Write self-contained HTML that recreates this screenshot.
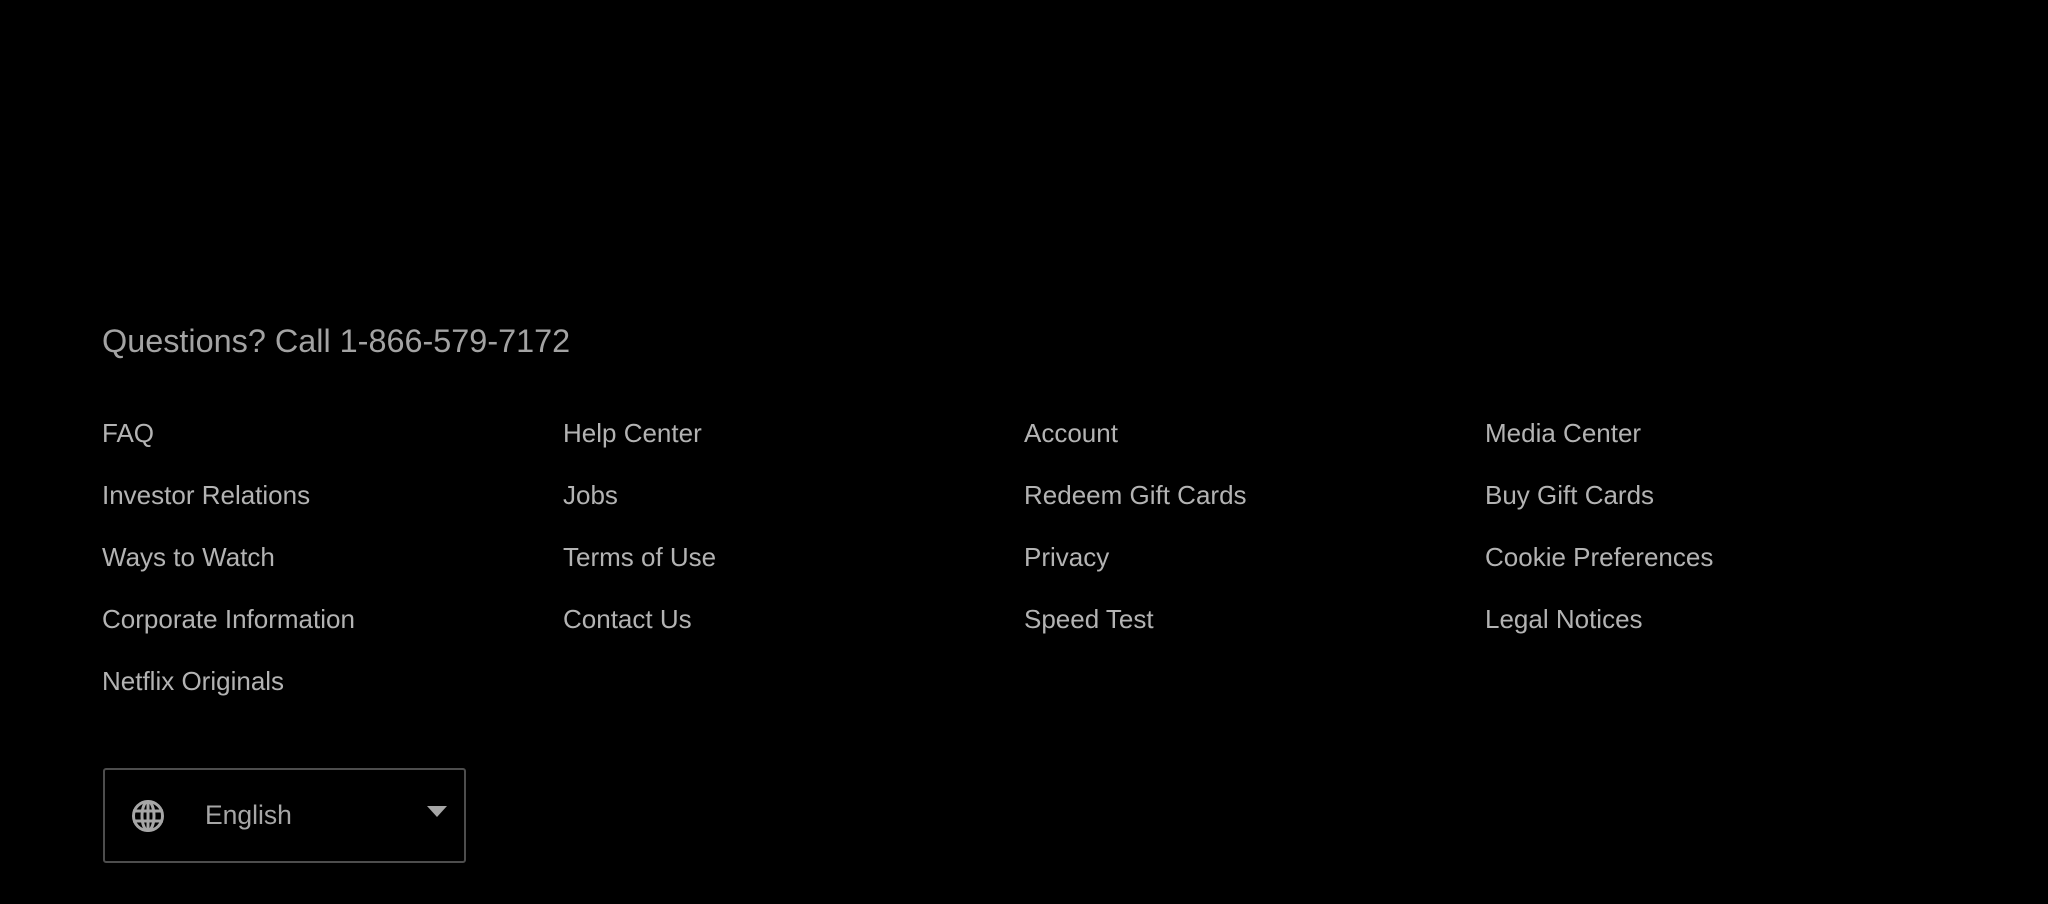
<!DOCTYPE html>
<html><head><meta charset="utf-8"><style>
html,body{margin:0;padding:0;background:#000;width:2048px;height:904px;overflow:hidden;font-family:"Liberation Sans",Arial,sans-serif}
.t{position:absolute;line-height:1;white-space:nowrap}
.q{font-size:32.4px;color:#a3a3a3;left:102px;top:325px}
.l{font-size:26px;color:#b3b3b3}
.box{position:absolute;left:103px;top:768px;width:363px;height:95px;border:2px solid #4d4d4d;border-radius:3px;box-sizing:border-box}
</style></head><body>
<div class="t q">Questions? Call 1-866-579-7172</div>

<div class="t l" style="left:102px;top:420px">FAQ</div>
<div class="t l" style="left:102px;top:482px">Investor Relations</div>
<div class="t l" style="left:102px;top:544px">Ways to Watch</div>
<div class="t l" style="left:102px;top:606px">Corporate Information</div>
<div class="t l" style="left:102px;top:668px">Netflix Originals</div>

<div class="t l" style="left:563px;top:420px">Help Center</div>
<div class="t l" style="left:563px;top:482px">Jobs</div>
<div class="t l" style="left:563px;top:544px">Terms of Use</div>
<div class="t l" style="left:563px;top:606px">Contact Us</div>

<div class="t l" style="left:1024px;top:420px">Account</div>
<div class="t l" style="left:1024px;top:482px">Redeem Gift Cards</div>
<div class="t l" style="left:1024px;top:544px">Privacy</div>
<div class="t l" style="left:1024px;top:606px">Speed Test</div>

<div class="t l" style="left:1485px;top:420px">Media Center</div>
<div class="t l" style="left:1485px;top:482px">Buy Gift Cards</div>
<div class="t l" style="left:1485px;top:544px">Cookie Preferences</div>
<div class="t l" style="left:1485px;top:606px">Legal Notices</div>

<div class="box"></div>
<svg style="position:absolute;left:131px;top:799px" width="34" height="34" viewBox="0 0 34 34">
<g fill="none" stroke="#a6a6a6" stroke-width="3">
<circle cx="17" cy="17" r="14.5"/>
<ellipse cx="17" cy="17" rx="6" ry="14.5"/>
<line x1="17" y1="2" x2="17" y2="32"/>
<line x1="2" y1="12" x2="32" y2="12"/>
<line x1="2" y1="22" x2="32" y2="22"/>
</g></svg>
<div class="t" style="left:205px;top:802px;font-size:26.5px;color:#a6a6a6">English</div>
<svg style="position:absolute;left:427px;top:806px" width="20" height="12" viewBox="0 0 20 12"><polygon points="0,0 20,0 10,11" fill="#a6a6a6"/></svg>
</body></html>
